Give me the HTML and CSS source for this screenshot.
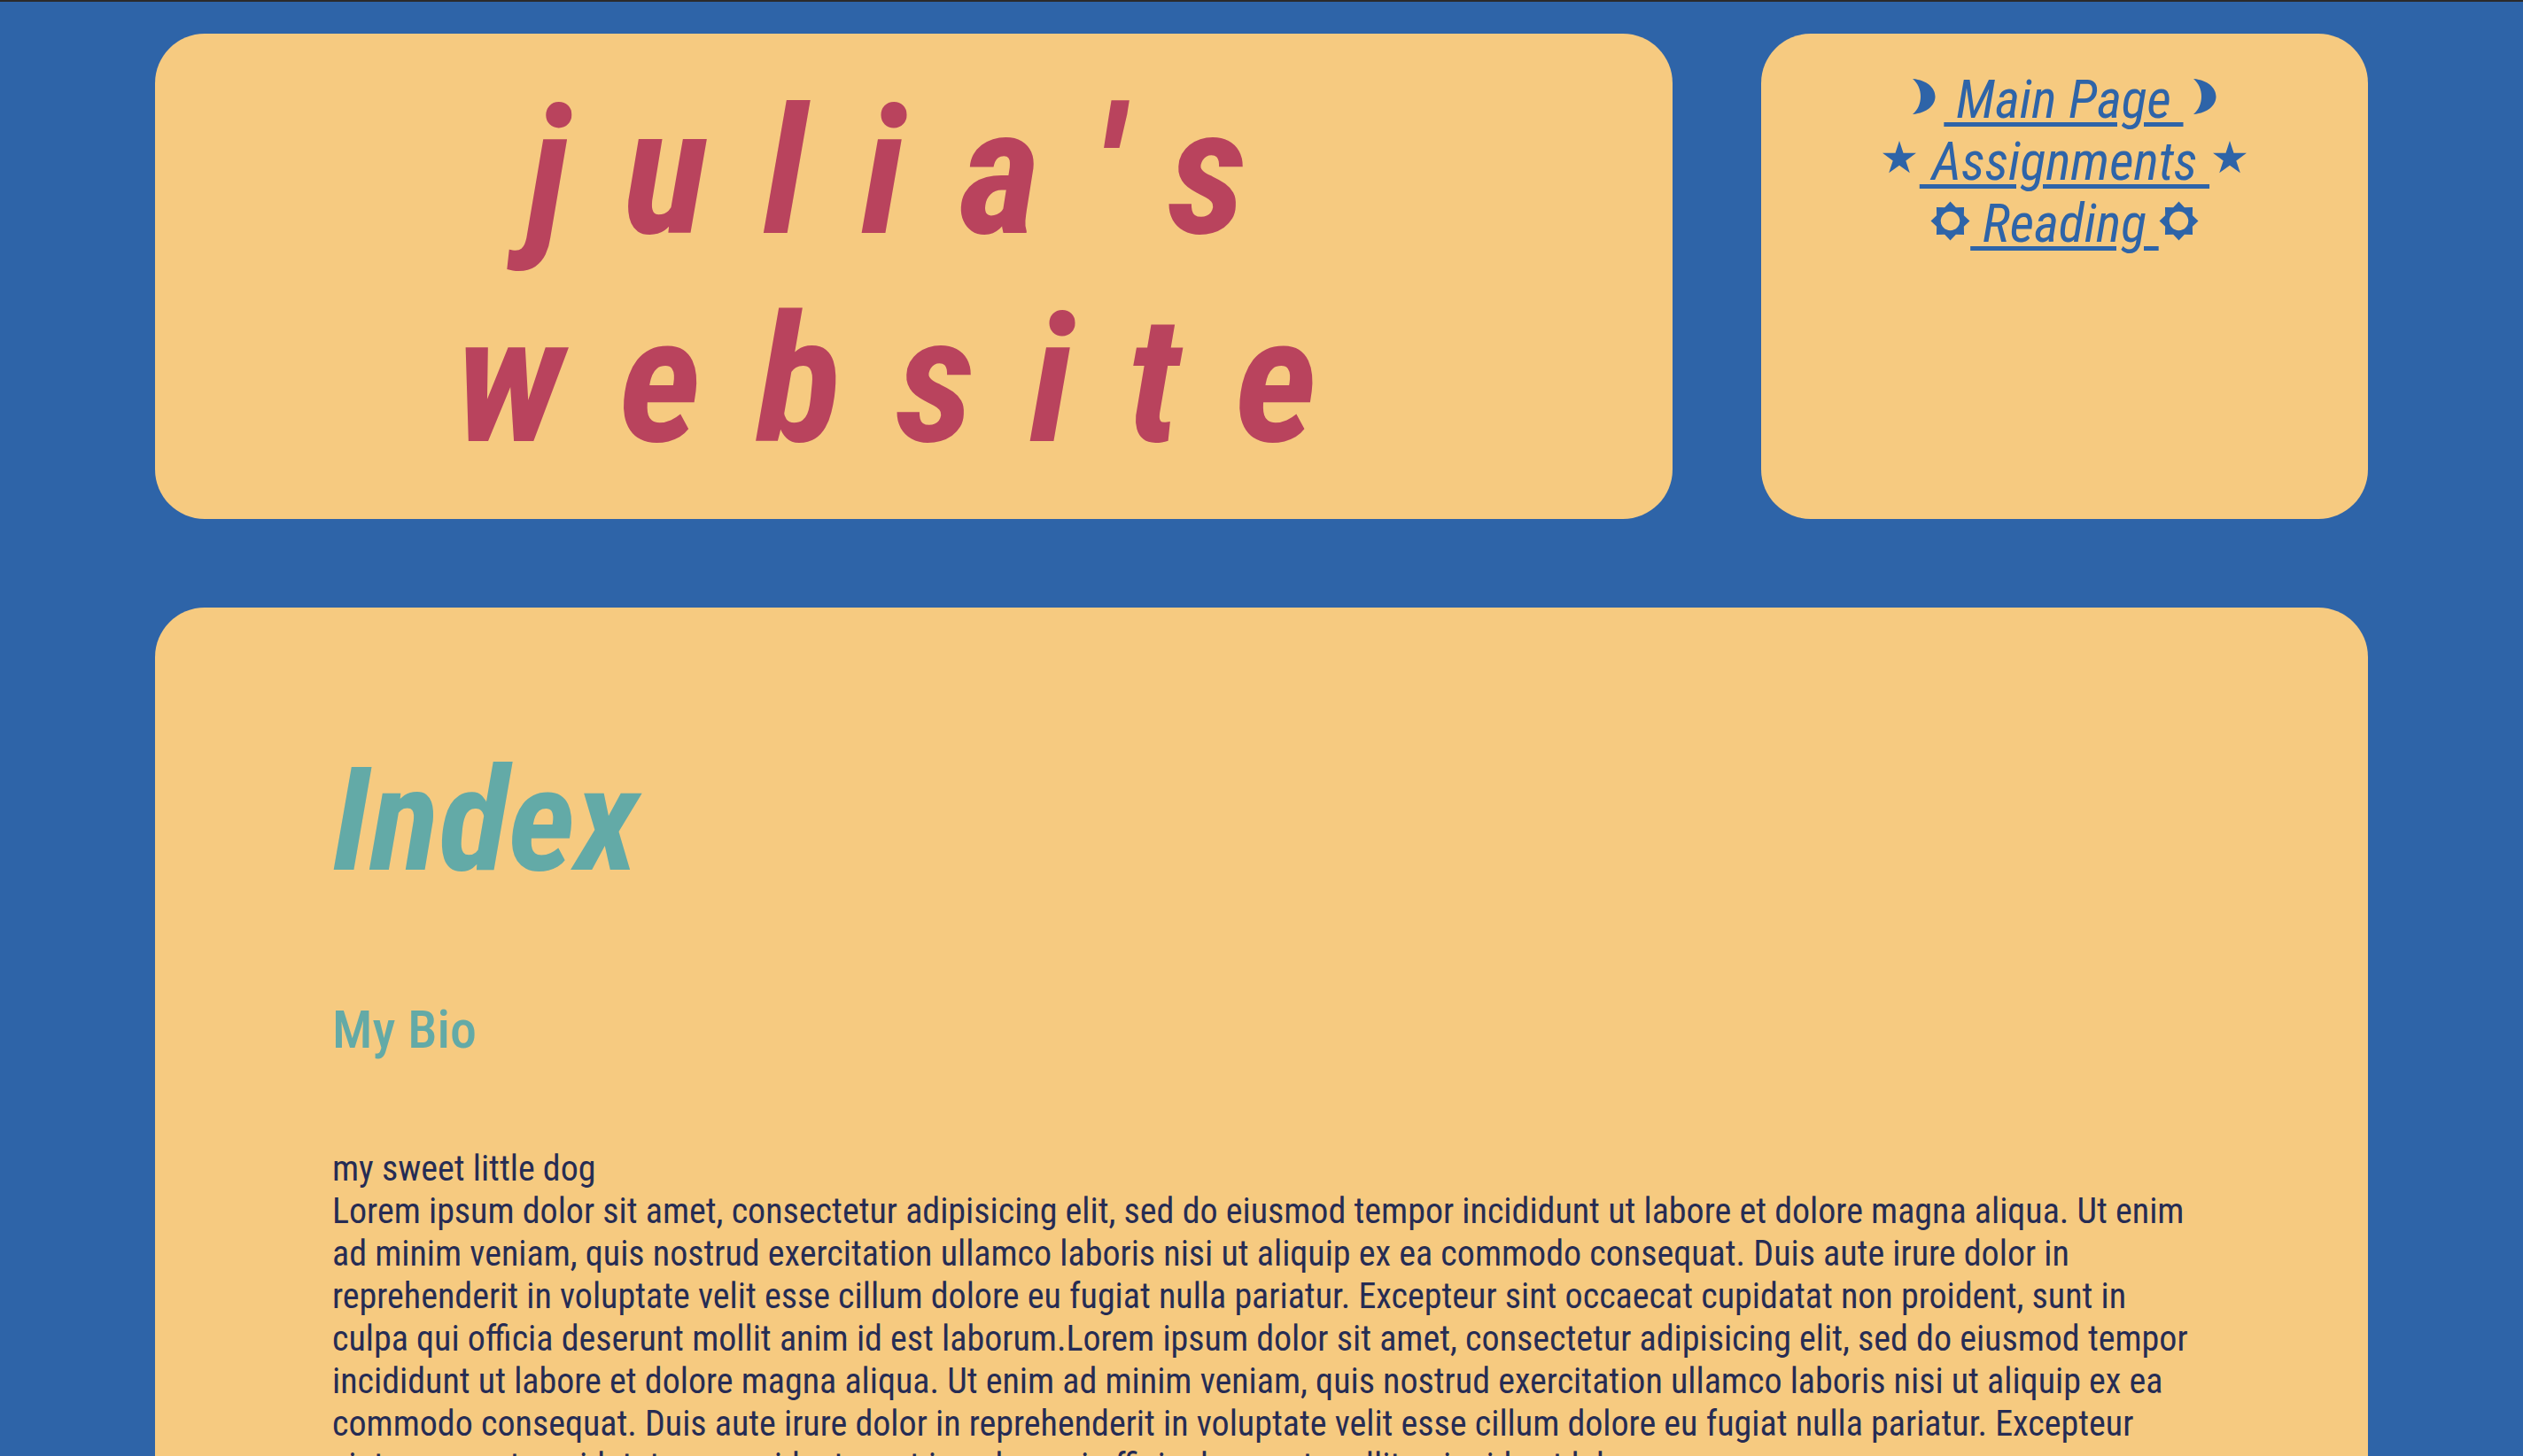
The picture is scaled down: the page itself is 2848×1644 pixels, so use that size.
FILE: index.html
```html
<!DOCTYPE html>
<html lang="en">
<head>
<meta charset="utf-8">
<title>julia's website</title>
<link rel="stylesheet" href="styles.css">
</head>
<body>
<div class="page">
  <div class="top">
    <header class="card title-card">
      <h1 class="title">julia's<br>website</h1>
    </header>
    <nav class="card nav-card">
      <div class="nav-line"><svg class="ico moon moon-l" viewBox="0 0 26 40"><path d="M0 0 C34 3 34 37 0 40 C12 30 12 10 0 0 Z"/></svg><a href="#"> Main Page </a><svg class="ico moon moon-r" viewBox="0 0 26 40"><path d="M0 0 C34 3 34 37 0 40 C12 30 12 10 0 0 Z"/></svg></div>
      <div class="nav-line"><svg class="ico star" viewBox="0 0 38 38"><path d="M19 0 L23.5 13.8 L38 13.8 L26.3 22.4 L30.8 36.2 L19 27.7 L7.2 36.2 L11.7 22.4 L0 13.8 L14.5 13.8 Z"/></svg><a href="#"> Assignments </a><svg class="ico star" viewBox="0 0 38 38"><path d="M19 0 L23.5 13.8 L38 13.8 L26.3 22.4 L30.8 36.2 L19 27.7 L7.2 36.2 L11.7 22.4 L0 13.8 L14.5 13.8 Z"/></svg></div>
      <div class="nav-line"><svg class="ico sun" viewBox="-23 -23 46 46"><path fill-rule="evenodd" d="M0 -22.5 L6.5 -15.7 L15.9 -15.9 L15.7 -6.5 L22.5 0 L15.7 6.5 L15.9 15.9 L6.5 15.7 L0 22.5 L-6.5 15.7 L-15.9 15.9 L-15.7 6.5 L-22.5 0 L-15.7 -6.5 L-15.9 -15.9 L-6.5 -15.7 Z M0 -11 A11 11 0 1 0 0 11 A11 11 0 1 0 0 -11 Z"/></svg><a href="#"> Reading </a><svg class="ico sun" viewBox="-23 -23 46 46"><path fill-rule="evenodd" d="M0 -22.5 L6.5 -15.7 L15.9 -15.9 L15.7 -6.5 L22.5 0 L15.7 6.5 L15.9 15.9 L6.5 15.7 L0 22.5 L-6.5 15.7 L-15.9 15.9 L-15.7 6.5 L-22.5 0 L-15.7 -6.5 L-15.9 -15.9 L-6.5 -15.7 Z M0 -11 A11 11 0 1 0 0 11 A11 11 0 1 0 0 -11 Z"/></svg></div>
    </nav>
  </div>
  <main class="card main-card">
    <h1 class="index-title">Index</h1>
    <h2 class="section-title">My Bio</h2>
    <p class="bio">my sweet little dog<br>Lorem ipsum dolor sit amet, consectetur adipisicing elit, sed do eiusmod tempor incididunt ut labore et dolore magna aliqua. Ut enim ad minim veniam, quis nostrud exercitation ullamco laboris nisi ut aliquip ex ea commodo consequat. Duis aute irure dolor in reprehenderit in voluptate velit esse cillum dolore eu fugiat nulla pariatur. Excepteur sint occaecat cupidatat non proident, sunt in culpa qui officia deserunt mollit anim id est laborum.Lorem ipsum dolor sit amet, consectetur adipisicing elit, sed do eiusmod tempor incididunt ut labore et dolore magna aliqua. Ut enim ad minim veniam, quis nostrud exercitation ullamco laboris nisi ut aliquip ex ea commodo consequat. Duis aute irure dolor in reprehenderit in voluptate velit esse cillum dolore eu fugiat nulla pariatur. Excepteur sint occaecat cupidatat non proident, sunt in culpa qui officia deserunt mollit anim id est laborum.</p>
  </main>
</div>
</body>
</html>
```

FILE: styles.css
```css
html {
  background: #2e64a8;
}

body {
  margin: 0;
  border-top: 2px solid #2b2b2b;
  background: #2e64a8;
  font-family: "Roboto Condensed", "Roboto", "Liberation Sans Narrow", sans-serif;
}

.page {
  width: 2498px;
  margin: 0 auto;
  padding-top: 36px;
}

.top {
  display: grid;
  grid-template-columns: 5fr 2fr;
  gap: 100px;
  height: 548px;
}

.card {
  background: #f6ca80;
  border-radius: 56px;
}

.title-card {
  display: flex;
  align-items: center;
  justify-content: center;
}

.title {
  margin: 0;
  font-size: 200px;
  font-weight: 700;
  font-style: italic;
  letter-spacing: 62px;
  line-height: normal;
  text-align: center;
  color: #b9435d;
}

.nav-card {
  padding-top: 40px;
  text-align: center;
  font-size: 60px;
  font-style: italic;
  line-height: 70px;
  color: #2e64a8;
}

.nav-line a {
  color: #2e64a8;
  text-decoration: underline;
  text-decoration-thickness: 5px;
  text-underline-offset: 5px;
}

.ico {
  fill: #2e64a8;
  display: inline-block;
}

.moon {
  width: 26px;
  height: 40px;
  vertical-align: 4px;
}

.moon-l {
  margin-right: 9px;
}

.moon-r {
  margin-left: 11px;
}

.star {
  width: 38px;
  height: 38px;
  vertical-align: 6px;
  margin: 0 4px;
}

.sun {
  width: 45px;
  height: 45px;
  vertical-align: 1px;
}

.main-card {
  margin-top: 100px;
  padding: 145px 200px 200px;
  border-bottom-left-radius: 0;
  border-bottom-right-radius: 0;
}

.index-title {
  margin: 0 0 105px;
  font-size: 163px;
  font-weight: 700;
  font-style: italic;
  line-height: normal;
  color: #63aaa7;
}

.section-title {
  margin: 0 0 98px;
  font-size: 60px;
  font-weight: 500;
  line-height: normal;
  color: #63aaa7;
}

.bio {
  margin: 0;
  font-size: 40px;
  line-height: 48px;
  color: #262c54;
}
```
